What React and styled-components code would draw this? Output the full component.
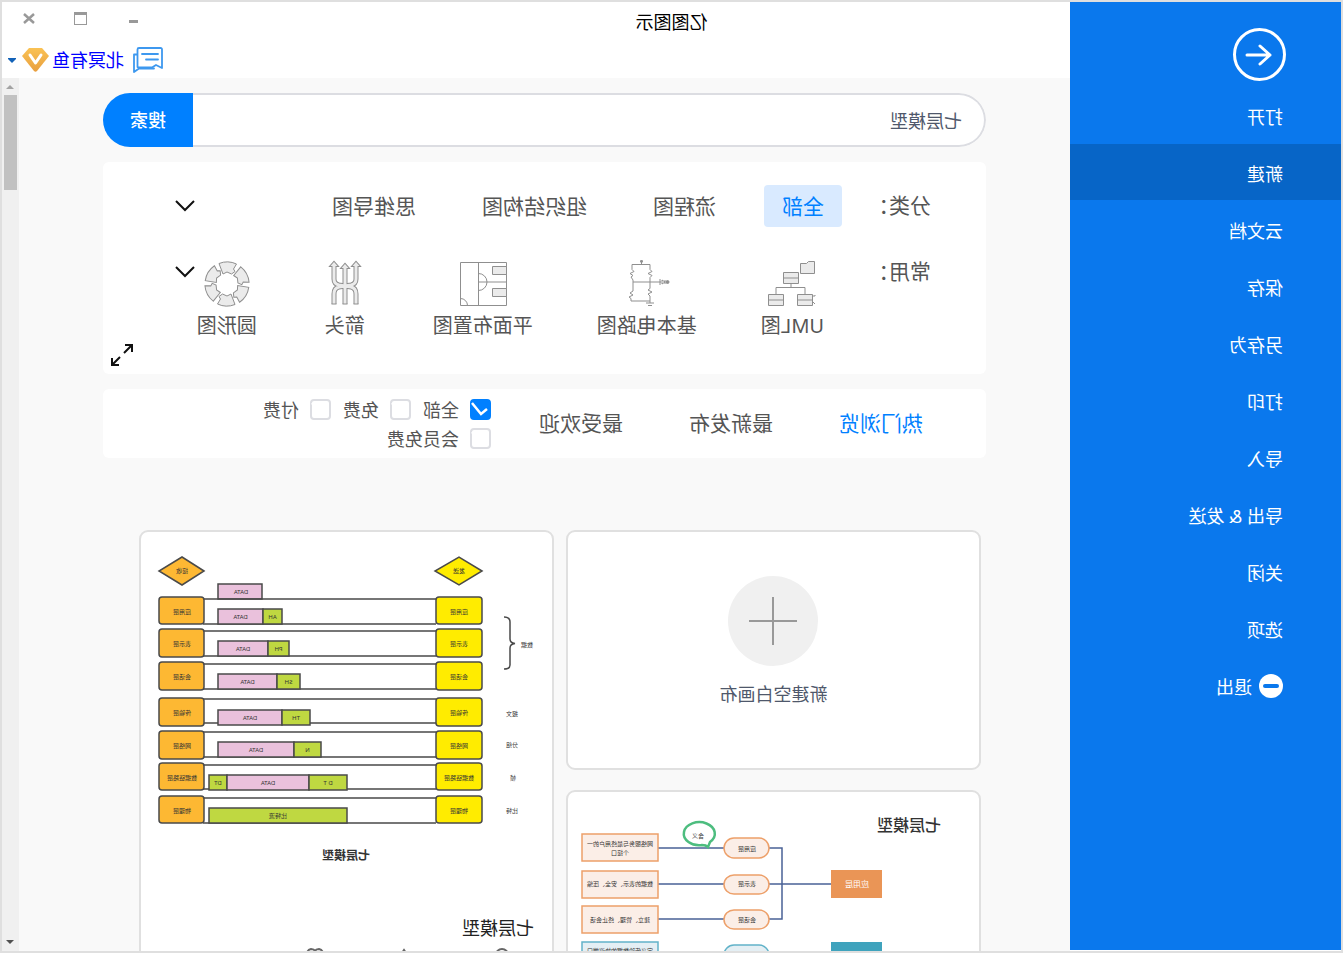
import React, { useState } from 'react';
import styled, { createGlobalStyle } from 'styled-components';

const menuItems = ['打开', '新建', '云文档', '保存', '另存为', '打印', '导入', '导出 & 发送', '关闭', '选项'];
const categories = ['全部', '流程图', '组织结构图', '思维导图'];
const tabs = ['热门浏览', '最新发布', '最受欢迎'];
const filters = ['全部', '免费', '付费', '会员免费'];

const layers = [
  { name: '应用层', y: 65, h: 27, top: 67, bottom: 92, barY: 77, bars: [['DATA', 289, 334, 'pink'], ['AH', 270, 289, 'green']] },
  { name: '表示层', y: 97, h: 28, top: 99, bottom: 124, barY: 109, bars: [['DATA', 284, 334, 'pink'], ['PH', 263, 284, 'green']] },
  { name: '会话层', y: 130, h: 28, top: 132, bottom: 157, barY: 142, bars: [['DATA', 275, 334, 'pink'], ['SH', 252, 275, 'green']] },
  { name: '传输层', y: 166, h: 28, top: 167, bottom: 191, barY: 178, bars: [['DATA', 270, 334, 'pink'], ['TH', 242, 270, 'green']] },
  { name: '网络层', y: 199, h: 28, top: 200, bottom: 225, barY: 210, bars: [['DATA', 258, 334, 'pink'], ['N', 231, 258, 'green']] },
  { name: '数据链路层', y: 231, h: 27, top: 233, bottom: 257, barY: 243, bars: [['DT', 325, 343, 'green'], ['DATA', 243, 325, 'pink'], ['D T', 205, 243, 'green']] },
  { name: '物理层', y: 264, h: 27, top: 266, bottom: 291, barY: 276, bars: [['比特流', 205, 343, 'green']] },
];

const barColors = { pink: '#eac1dc', green: '#bfd841' };

function UmlIcon() {
  return (
    <ShapeSvg viewBox="0 0 48 48">
      <path d="M1.500 1.500h6l2 2h6v10h-14z" />
      <path d="M17.500 12.500h15v11h-15zM3.500 34.500h15v11h-15zM32.500 34.500h15v11h-15z" />
      <path d="M17.500 18h15M3.500 40h15M32.500 40h15M25 23.500v4M11 34v-6.500h29V34M3 36H1v-1M3 42l-2 2" fill="none" />
    </ShapeSvg>
  );
}

function CircuitIcon() {
  return (
    <ShapeSvg viewBox="0 0 48 48">
      <path
        fill="none"
        d="M29.500 1v3.500M28 1h3M21 4.500h18v5l-2 2 4 2-3 2 2 1.500-2 3v11l3 2-3 2 4 2-2 1.500V41H21v-5l2-2-4-2 4-2-2-1.500v-11l-2-2 4-2-4-2 2-2zM38 22H10M21 41v2M17 43h8M19 45.500h4M11 19v6M9 20l-3 2 3 2zM6 20v4"
      />
      <circle cx="3.500" cy="22" r="1.500" fill="#8f8f8f" />
      <circle cx="29.500" cy="1.500" r="1" fill="#8f8f8f" />
    </ShapeSvg>
  );
}

function FloorIcon() {
  return (
    <ShapeSvg viewBox="0 0 48 48">
      <path d="M.5 2.500h46v43H.5z" fill="#fff" />
      <path d="M.5 6.500h14v8H.5zM.5 28.500h14v8H.5z" />
      <path d="M28.500 2.500v43M.5 22h28M28.500 13.500a8.500 8.500 0 0 0 0 17M39.500 45.500a7 7 0 0 1 7-7" fill="none" />
    </ShapeSvg>
  );
}

function ArrowsIcon() {
  const shafts = 'M35 5v14q0 5-5 6-6 1-6 1t-6-1q-5-1-5-6V5M35 44V34q0-6-5-7l-6-1-6 1q-5 1-5 7v10M24 8v36';
  const heads = 'M31.500 6l3.500-4 3.500 4zM9.500 6L13 2l3.500 4zM20.500 8L24 4l3.500 4z';
  return (
    <svg width="48" height="48" viewBox="0 0 48 48" aria-hidden="true">
      <g fill="none">
        <path d={shafts} stroke="#8f8f8f" strokeWidth="5" />
        <path d={heads} stroke="#8f8f8f" strokeWidth="2" />
        <path d={shafts} stroke="#ebebeb" strokeWidth="3" />
        <path d={heads} fill="#ebebeb" />
        <path d="M10.500 44h5M21.500 44h5M32.500 44h5" stroke="#8f8f8f" />
      </g>
    </svg>
  );
}

function RingIcon() {
  return (
    <ShapeSvg viewBox="0 0 48 48">
      {[0, 60, 120, 180, 240, 300].map((deg) => (
        <path key={deg} transform={`rotate(${deg} 24 24)`} d="M14.500 4A22 22 0 0 1 32 3.500L28 14l-4-2-4.500 2-3.500-2.500L17.500 9z" />
      ))}
    </ShapeSvg>
  );
}

const shapes = [
  { label: 'UML图', Icon: UmlIcon },
  { label: '基本电路图', Icon: CircuitIcon },
  { label: '平面布置图', Icon: FloorIcon },
  { label: '箭头', Icon: ArrowsIcon },
  { label: '圆形图', Icon: RingIcon },
];

function Chevron() {
  return (
    <ChevronButton type="button" aria-label="展开">
      <svg width="20" height="12" viewBox="0 0 20 12" fill="none" stroke="#111" strokeWidth="2">
        <path d="M1 1l9 9 9-9" />
      </svg>
    </ChevronButton>
  );
}

function LayersDiagram() {
  return (
    <Diagram viewBox="0 0 411 376">
      <g stroke="#4a4a4a" strokeWidth="1.500">
        <path d="M70 39l23-14 24 14-24 14z" fill="#ffec00" />
        <path d="M348 39l22-14 23 14-23 14z" fill="#fdb833" />
        <path d="M290 52h44v15h-44z" fill={barColors.pink} />
      </g>
      <text x="93" y="41">发送</text>
      <text x="370" y="41">接收</text>
      <text x="311" y="62">DATA</text>
      {layers.map((layer) => (
        <g key={layer.name}>
          <g stroke="#4a4a4a" strokeWidth="1.500">
            <path d={`M116 ${layer.top}H349M116 ${layer.bottom}H349`} />
            {layer.bars.map(([label, from, to, color]) => (
              <rect key={label} x={from} y={layer.barY} width={to - from} height="15" fill={barColors[color]} />
            ))}
            <rect x="70" y={layer.y} width="46" height={layer.h} rx="3" fill="#ffec00" />
            <rect x="348" y={layer.y} width="45" height={layer.h} rx="3" fill="#fdb833" />
          </g>
          {layer.bars.map(([label, from, to]) => (
            <text key={label} x={(from + to) / 2} y={layer.barY + 10}>{label}</text>
          ))}
          <text x="93" y={layer.y + 17}>{layer.name}</text>
          <text x="370" y={layer.y + 17}>{layer.name}</text>
        </g>
      ))}
      <path d="M48 85q-6 0-6 5v17q0 4-5 4.500 5 .5 5 4.500v17q0 4 6 4" fill="none" stroke="#4a4a4a" strokeWidth="1.500" />
      <text x="25" y="115">数据</text>
      <text x="40" y="184">报文</text>
      <text x="40" y="215">分组</text>
      <text x="39" y="248">帧</text>
      <text x="40" y="281">比特</text>
      <text x="206" y="328" fontSize="12" fontWeight="700">七层模型</text>
    </Diagram>
  );
}

function TreeDiagram() {
  return (
    <Diagram viewBox="0 0 411 376">
      <text x="70" y="39" fontSize="16" fontWeight="500">七层模型</text>
      <path d="M148 92h173M210 56h-13v71h13M255 56h66M255 127h66" fill="none" stroke="#4a6296" strokeWidth="1.500" />
      <path d="M97 78h51v28H97z" fill="#ea9556" />
      <path d="M97 150h51v28H97z" fill="#3fa3bd" />
      <g fill="#fbeee7" stroke="#eda06a" strokeWidth="1.500">
        <rect x="210" y="46" width="45" height="20" rx="10" />
        <rect x="210" y="83" width="45" height="19" rx="10" />
        <rect x="210" y="118" width="45" height="19" rx="10" />
        <path d="M321 42h76v27h-76zM321 79h76v27h-76zM321 114h76v27h-76z" />
      </g>
      <g fill="#e4eff4" stroke="#62b3c9" strokeWidth="1.500">
        <rect x="210" y="153" width="45" height="20" rx="10" />
        <path d="M321 150h76v27h-76z" />
      </g>
      <path d="M269 50a15.500 11.500 0 1 1 8 3q-4 0-6 2z" fill="#fff" stroke="#4dbd7f" strokeWidth="2.500" />
      <text x="281" y="46">含义</text>
      <text x="122" y="95" fontSize="8" fill="#fff">应用层</text>
      <text x="232" y="59">应用层</text>
      <text x="232" y="94">表示层</text>
      <text x="232" y="130">会话层</text>
      <text x="359" y="54">网络服务与最终用户的一</text>
      <text x="359" y="63">个接口</text>
      <text x="359" y="94">数据的表示、安全、压缩</text>
      <text x="359" y="130">建立、管理、终止会话</text>
      <text x="359" y="161">定义传输数据的协议端口</text>
    </Diagram>
  );
}

function Sidebar() {
  return (
    <Side>
      <BackButton type="button" aria-label="返回">
        <svg width="53" height="53" viewBox="0 0 53 53" fill="none" stroke="#fff" strokeWidth="3" strokeLinecap="round" strokeLinejoin="round">
          <circle cx="26.500" cy="26.500" r="25" />
          <path d="M39 27H16M26 18l-10 9 10 9" />
        </svg>
      </BackButton>
      {menuItems.map((item) => (
        <MenuItem type="button" key={item} $active={item === '新建'}>{item}</MenuItem>
      ))}
      <MenuItem type="button">
        <svg width="24" height="24" viewBox="0 0 24 24">
          <circle cx="12" cy="12" r="12" fill="#fff" />
          <rect x="4" y="10" width="16" height="4" rx="2" fill="#0a78ed" />
        </svg>
        退出
      </MenuItem>
    </Side>
  );
}

function Header() {
  return (
    <header>
      <TitleBar>
        <Title>亿图图示</Title>
        <WindowButtons>
          <WindowButton type="button" aria-label="最小化">
            <svg width="14" height="14"><path d="M2 8h9v3H2z" fill="#999" /></svg>
          </WindowButton>
          <WindowButton type="button" aria-label="最大化">
            <svg width="14" height="14"><path d="M1 0h13v13H1zM2 3v9h11V3z" fill="#999" fillRule="evenodd" /></svg>
          </WindowButton>
          <WindowButton type="button" aria-label="关闭">
            <svg width="14" height="14"><path d="M2 2l10 9M12 2L2 11" stroke="#999" strokeWidth="2.500" /></svg>
          </WindowButton>
        </WindowButtons>
      </TitleBar>
      <Account>
        <svg width="30" height="26" viewBox="0 0 30 26" fill="none" stroke="#3d98ef" strokeWidth="1.800" strokeLinejoin="round" strokeLinecap="round">
          <path d="M5 1h19q1.500 0 1.500 1.500V20M5 1h-2.500Q1 1 1 2.500V21l6-3 4 2.500h13q1.500 0 1.500-1.500" />
          <path d="M26 7.500h3V25l-5-3.500H9M5 7h16M5 12.500h12" />
        </svg>
        <UserLink href="#account">北冥有鱼</UserLink>
        <svg width="27" height="24" viewBox="0 0 27 24">
          <defs>
            <linearGradient id="gem" x1="0" y1="0" x2="0" y2="1">
              <stop offset="0" stopColor="#fac254" />
              <stop offset="1" stopColor="#e89f3f" />
            </linearGradient>
          </defs>
          <path d="M7 0h13l7 8-12 15q-1.500 1.500-3 0L0 8z" fill="url(#gem)" />
          <path d="M8 7l5.500 8L19 7" fill="none" stroke="#fff" strokeWidth="3" strokeLinecap="round" strokeLinejoin="round" />
        </svg>
        <CaretButton type="button" aria-label="账户菜单">
          <svg width="8" height="5"><path d="M0 0h8v1L4 5 0 1z" fill="#1262b8" /></svg>
        </CaretButton>
      </Account>
    </header>
  );
}

function Shapes() {
  return (
    <Panel>
      <PanelRow>
        <RowLabel>分类：</RowLabel>
        <Tags>
          {categories.map((name, i) => (
            <Tag type="button" key={name} $active={i === 0}>{name}</Tag>
          ))}
        </Tags>
        <Chevron />
      </PanelRow>
      <PanelRow>
        <RowLabel>常用：</RowLabel>
        <ShapeList>
          {shapes.map(({ label, Icon }) => (
            <ShapeButton type="button" key={label}>
              <Icon />
              {label}
            </ShapeButton>
          ))}
        </ShapeList>
        <Chevron />
      </PanelRow>
      <ExpandButton type="button" aria-label="全屏">
        <svg width="22" height="22" viewBox="0 0 22 22" fill="none" stroke="#111" strokeWidth="2">
          <path d="M9 9L2 2M1 8V1h7M13 13l7 7M21 14v7h-7" />
        </svg>
      </ExpandButton>
    </Panel>
  );
}

function Filters() {
  const [checked, setChecked] = useState(['全部']);
  const toggle = (name) => {
    setChecked(checked.includes(name) ? checked.filter((n) => n !== name) : [...checked, name]);
  };
  return (
    <FilterPanel>
      <Tabs>
        {tabs.map((name, i) => (
          <Tab type="button" key={name} $active={i === 0}>{name}</Tab>
        ))}
      </Tabs>
      <Checks>
        {filters.map((name) => (
          <CheckLabel key={name}>
            <CheckBox>
              <input type="checkbox" checked={checked.includes(name)} onChange={() => toggle(name)} />
              <svg width="21" height="21" fill="none" stroke="#fff" strokeWidth="2.500">
                <path d="M19 4l-9 11-6-5" />
              </svg>
            </CheckBox>
            {name}
          </CheckLabel>
        ))}
      </Checks>
    </FilterPanel>
  );
}

function Templates() {
  return (
    <Cards>
      <CardColumn>
        <NewCard type="button">
          <svg width="90" height="90" viewBox="0 0 90 90">
            <circle cx="45" cy="45" r="45" fill="#f0f0f0" />
            <path d="M45 21v48M21 45h48" stroke="#999" strokeWidth="2" />
          </svg>
          新建空白画布
        </NewCard>
        <Card>
          <TreeDiagram />
        </Card>
      </CardColumn>
      <CardColumn>
        <Card>
          <LayersDiagram />
          <CardTitle>七层模型</CardTitle>
          <Stats>
            <svg width="20" height="18" fill="none" stroke="#666" strokeWidth="2"><circle cx="10" cy="7" r="6" /></svg>
            <svg width="20" height="18" fill="none" stroke="#666" strokeWidth="2"><path d="M10 8l4-6 4 6v8h-8z" /></svg>
            <svg width="20" height="18" fill="none" stroke="#666" strokeWidth="2"><path d="M10 16L3 8q-2-6 3-7 3 0 4 2 1-2 4-2 5 1 3 7z" /></svg>
          </Stats>
        </Card>
      </CardColumn>
    </Cards>
  );
}

export default function App() {
  const [query, setQuery] = useState('七层模型');
  return (
    <>
      <GlobalStyle />
      <Window>
        <Sidebar />
        <Main>
          <Header />
          <Body>
            <Content>
              <Search onSubmit={(e) => e.preventDefault()}>
                <SearchInput aria-label="搜索模板" value={query} onChange={(e) => setQuery(e.target.value)} />
                <SearchButton type="submit">搜索</SearchButton>
              </Search>
              <Shapes />
              <Filters />
              <Templates />
            </Content>
            <ScrollBar>
              <svg width="8" height="17"><path d="M0 11l4-4 4 4z" fill="#a3a3a3" /></svg>
              <Thumb />
              <svg width="8" height="17"><path d="M0 6h8l-4 4z" fill="#505050" /></svg>
            </ScrollBar>
          </Body>
        </Main>
      </Window>
    </>
  );
}

const GlobalStyle = createGlobalStyle`
* {
    box-sizing: border-box;
}
body {
    margin: 0;
}
body, button, input {
    font-family: "Noto Sans", "Noto Sans CJK SC", sans-serif;
    font-size: 18px;
}
button {
    padding: 0;
    border: 0;
    background: none;
    cursor: pointer;
}
svg {
    display: block;
    flex-shrink: 0;
}
`;

// the whole window is flipped left to right
const Window = styled.div`
display: flex;
height: 100vh;
overflow: hidden;
border: 2px solid #dfdfdf;
background: #fff;
transform: scaleX(-1);
`;

const Side = styled.nav`
display: flex;
flex-direction: column;
gap: 1px;
flex: 0 0 271px;
padding-top: 26px;
background: #0a78ed;
border-bottom: 1px solid #fff;
`;

const BackButton = styled.button`
align-self: flex-start;
margin: 0 0 5px 55px;
`;

const MenuItem = styled.button`
display: flex;
align-items: center;
gap: 7px;
height: 56px;
padding: 2px 0 0 58px;
color: #fff;
font-weight: 400;
background: ${(props) => (props.$active ? '#0765c7' : 'transparent')};
`;

const Main = styled.main`
display: flex;
flex-direction: column;
flex: 1;
min-width: 0;
`;

const TitleBar = styled.div`
display: flex;
height: 40px;
`;

const Title = styled.div`
flex: 1;
text-align: center;
line-height: 40px;
`;

const WindowButtons = styled.div`
display: flex;
justify-content: flex-end;
gap: 20px;
flex: 0 0 271px;
padding-right: 11px;
`;

const WindowButton = styled.button`
display: flex;
align-items: center;
justify-content: center;
width: 32px;
height: 34px;
`;

const Account = styled.div`
display: flex;
align-items: center;
justify-content: flex-end;
height: 36px;
padding-right: 6px;
`;

const UserLink = styled.a`
margin: 0 3px 0 9px;
padding-bottom: 2px;
color: #00f;
text-decoration: none;
`;

const CaretButton = styled.button`
margin-left: 6px;
`;

const Body = styled.div`
display: flex;
flex: 1;
min-height: 0;
background: #f9f9f9;
`;

const Content = styled.div`
flex: 1;
min-width: 0;
padding: 15px 84px 0;
overflow-y: auto;
scrollbar-width: none;
`;

const ScrollBar = styled.div`
display: flex;
flex-direction: column;
align-items: center;
width: 17px;
background: #f0f0f0;

svg:last-child {
    margin-top: auto;
}
`;

const Thumb = styled.div`
width: 13px;
height: 95px;
background: #c1c1c1;
`;

const Search = styled.form`
display: flex;
height: 54px;
border-radius: 27px;
overflow: hidden;
`;

const SearchInput = styled.input`
flex: 1;
min-width: 0;
padding: 0 22px;
border: 2px solid #dcdde2;
border-right: 0;
border-radius: 27px 0 0 27px;
color: #4f586b;
background: #fff;
outline: none;
`;

const SearchButton = styled.button`
width: 90px;
padding-bottom: 2px;
color: #fff;
font-weight: 500;
background: #0080ff;
`;

const Panel = styled.section`
display: flex;
flex-direction: column;
margin-top: 15px;
padding: 23px 0 8px;
border-radius: 6px;
background: #fff;
`;

const PanelRow = styled.div`
display: flex;
align-items: flex-start;
padding: 0 72px 0 55px;

& + & {
    margin-top: 24px;
}
`;

const RowLabel = styled.div`
width: 89px;
color: #555;
font-size: 21px;
line-height: 41px;
`;

const Tags = styled.div`
display: flex;
gap: 30px;
`;

const Tag = styled.button`
height: 42px;
padding: 0 18px 3px;
border-radius: 4px;
font-size: 21px;
color: ${(props) => (props.$active ? '#0080ff' : '#555')};
background: ${(props) => (props.$active ? '#d9eaff' : 'transparent')};
`;

const ChevronButton = styled.button`
display: flex;
align-items: center;
height: 42px;
margin-left: auto;
`;

const ShapeList = styled.div`
display: flex;
gap: 64px;
padding: 9px 0 0 18px;
`;

const ShapeButton = styled.button`
display: flex;
flex-direction: column;
align-items: center;
gap: 4px;
min-width: 48px;
color: #555;
font-size: 20px;
line-height: 28px;
white-space: nowrap;
`;

const ShapeSvg = styled.svg`
width: 48px;
height: 48px;
fill: #ebebeb;
stroke: #8f8f8f;
`;

const ExpandButton = styled.button`
align-self: flex-end;
margin: 4px 8px 0 0;
`;

const FilterPanel = styled.section`
display: flex;
align-items: center;
gap: 48px;
min-height: 69px;
margin-top: 15px;
padding-left: 63px;
border-radius: 6px;
background: #fff;
`;

const Tabs = styled.div`
display: flex;
gap: 66px;
`;

const Tab = styled.button`
padding-bottom: 3px;
font-size: 21px;
color: ${(props) => (props.$active ? '#0080ff' : '#555')};
`;

const Checks = styled.div`
display: flex;
flex-wrap: wrap;
gap: 8px 12px;
max-width: 300px;
`;

const CheckLabel = styled.label`
display: flex;
align-items: center;
gap: 11px;
height: 21px;
color: #555;
`;

const CheckBox = styled.span`
display: grid;

input, svg {
    grid-area: 1 / 1;
}
svg {
    pointer-events: none;
}
input {
    appearance: none;
    width: 21px;
    height: 21px;
    margin: 0;
    border: 2px solid #dcdde2;
    border-radius: 4px;
    background: #fff;
}
input:checked {
    border-color: #0080ff;
    background: #0080ff;
}
`;

const Cards = styled.div`
display: grid;
grid-template-columns: 1fr 1fr;
gap: 12px;
margin-top: 72px;
padding: 0 36px 20px 5px;
`;

const CardColumn = styled.div`
display: flex;
flex-direction: column;
gap: 20px;
`;

const Card = styled.article`
border: 2px solid #e0e0e0;
border-radius: 9px;
background: #fff;
`;

const NewCard = styled.button`
display: flex;
flex-direction: column;
align-items: center;
gap: 14px;
height: 240px;
padding-top: 44px;
border: 2px solid #e0e0e0;
border-radius: 9px;
color: #4f586b;
line-height: 28px;
background: #fff;
`;

const Diagram = styled.svg`
width: 100%;

text {
    text-anchor: middle;
}
text:not([font-size]) {
    font-size: 6px;
}
text:not([fill]) {
    fill: #333;
}
`;

const CardTitle = styled.div`
padding: 6px 18px 0;
line-height: 28px;
color: #222;
`;

const Stats = styled.div`
display: flex;
justify-content: space-between;
padding: 6px 164px 12px 40px;
`;
